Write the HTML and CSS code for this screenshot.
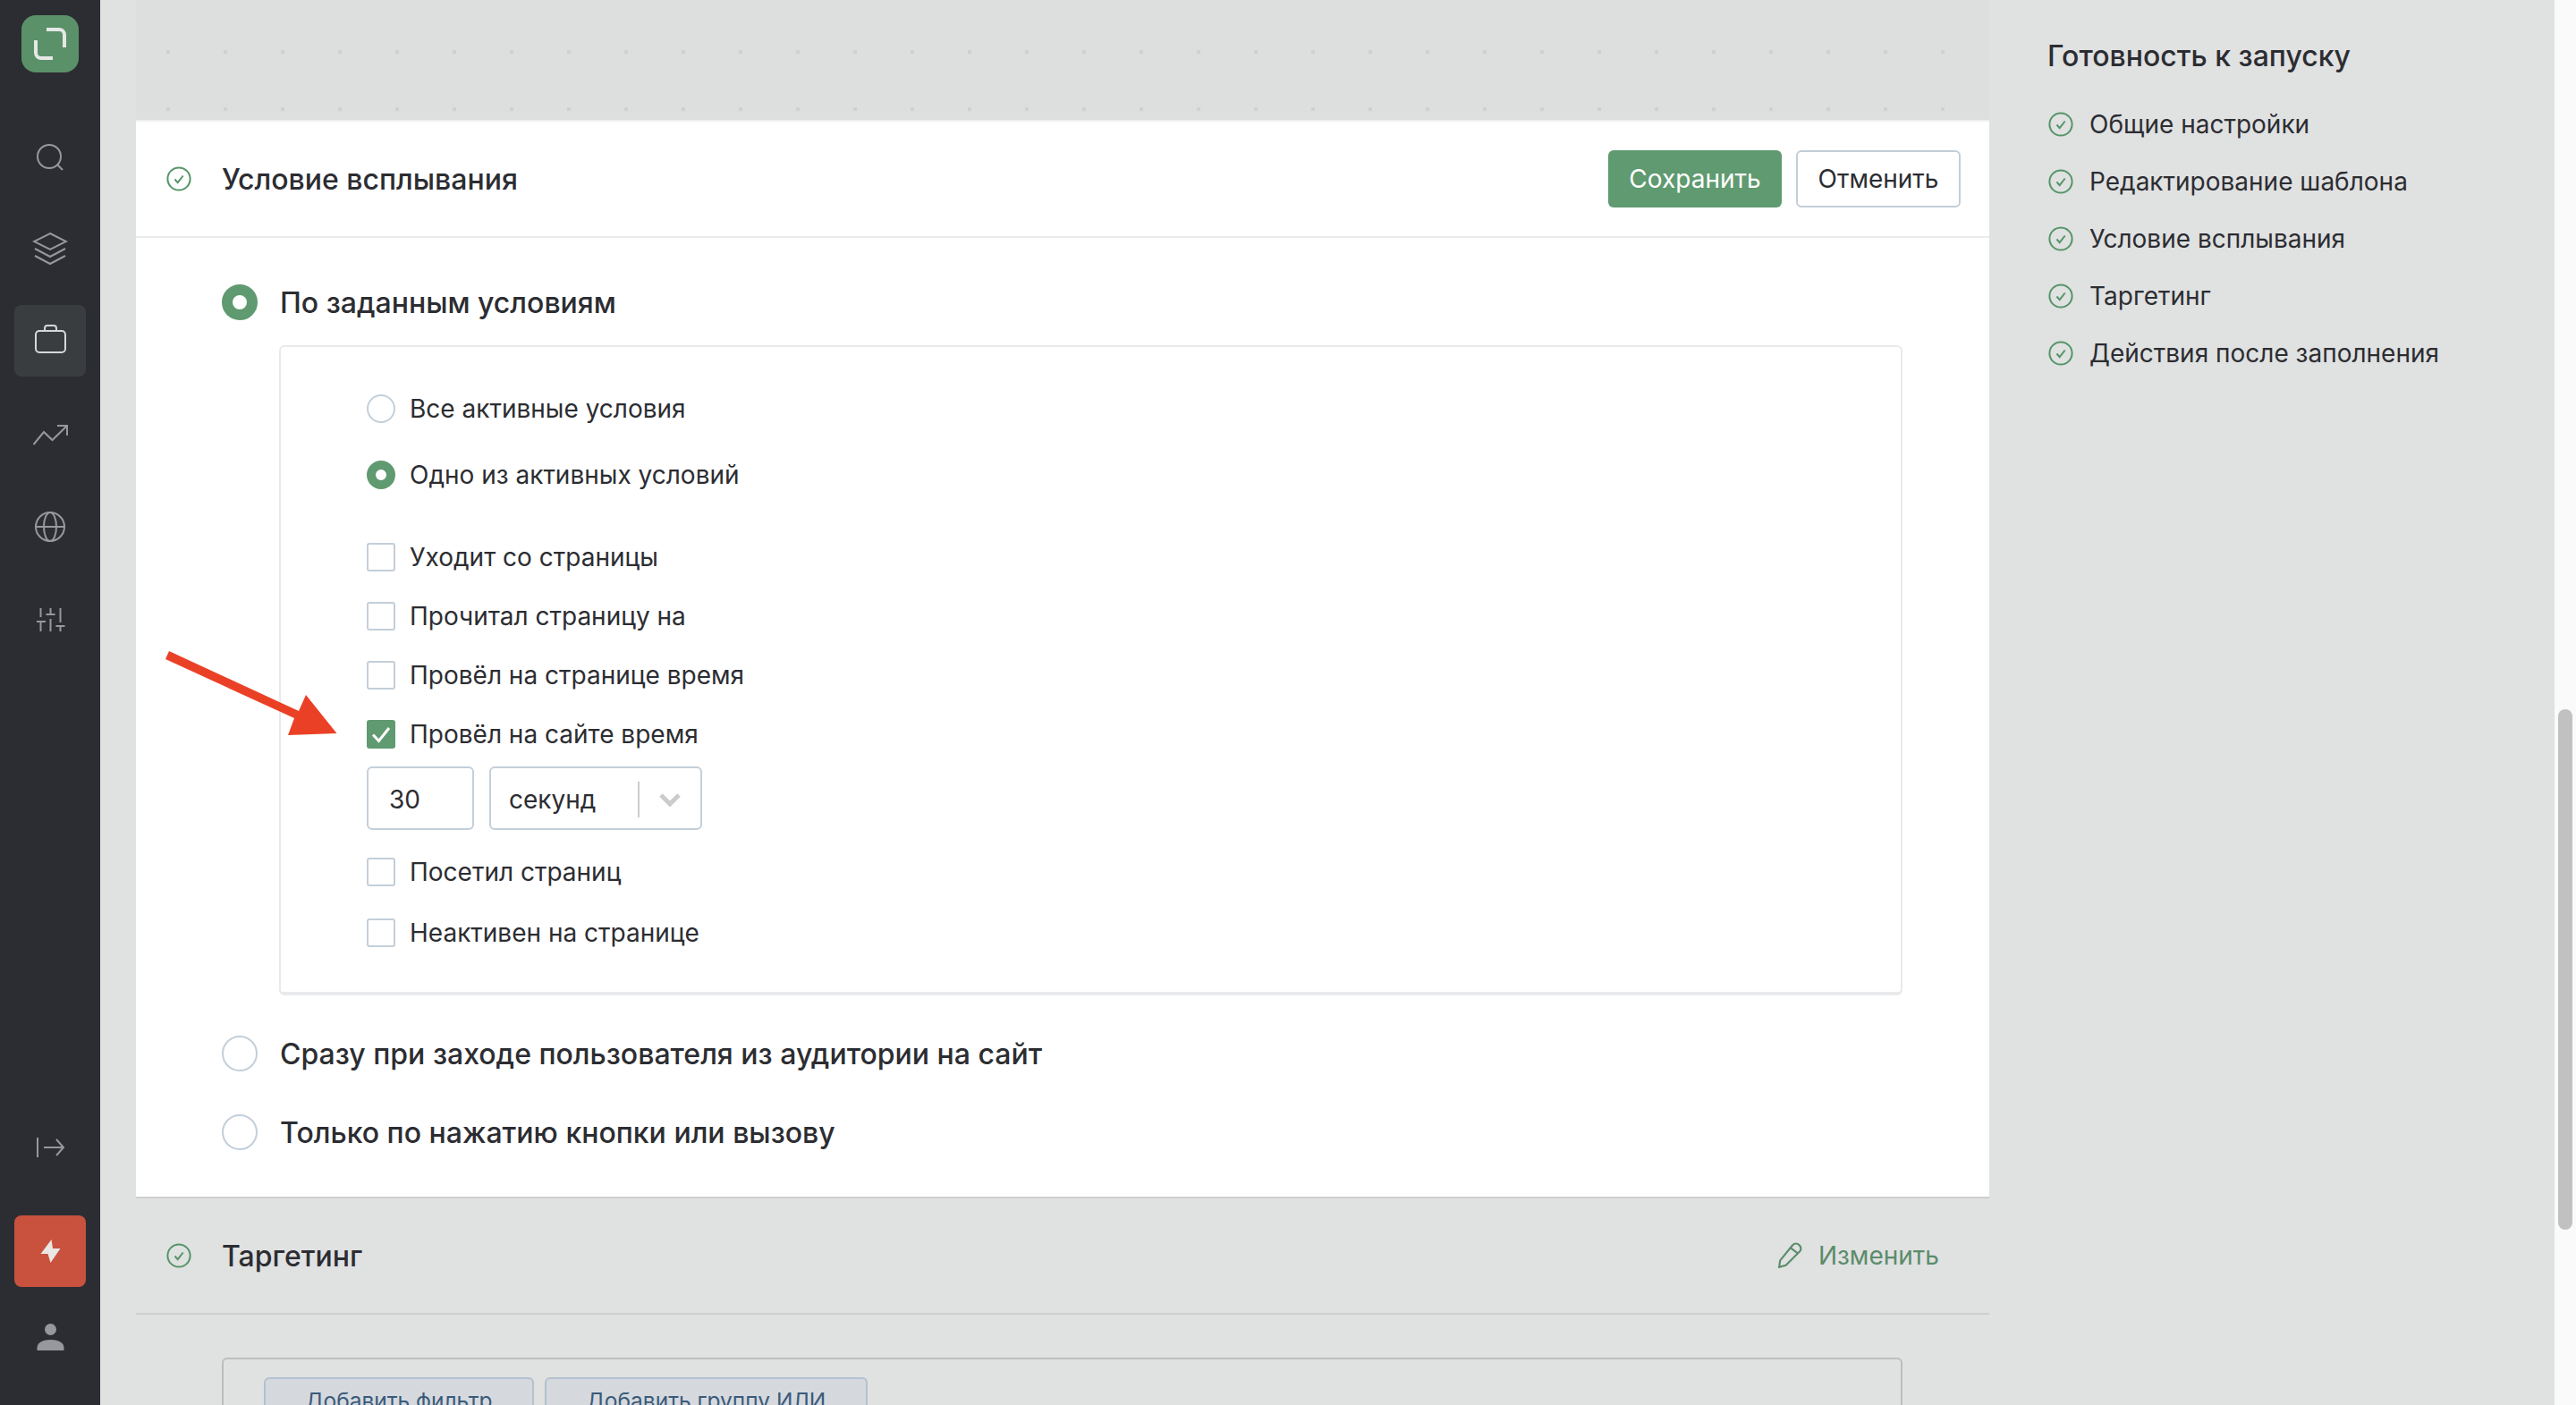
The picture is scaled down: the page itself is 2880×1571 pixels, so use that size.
FILE: index.html
```html
<!DOCTYPE html>
<html>
<head>
	<meta charset="utf-8">
	<title>Условие всплывания</title>
	<link rel="stylesheet" href="styles.css">
</head>
<body>

	<svg class="defs" width="0" height="0">
		<symbol id="check" viewBox="0 0 28 28">
			<circle cx="14" cy="14" r="12.6" fill="none" stroke="#549568" stroke-width="2"/>
			<path d="M9.5 14.5l3.2 3.6 6-7.6" fill="none" stroke="#549568" stroke-width="2"/>
		</symbol>
	</svg>

	<div class="sidebar">
		<div class="logo">
			<svg width="64" height="64" viewBox="0 0 64 64" fill="none" stroke="#e6e8e6" stroke-width="4">
				<path d="M28 16H42a6 6 0 0 1 6 6V36"/>
				<path d="M16 28V42a6 6 0 0 0 6 6H35"/>
			</svg>
		</div>
		<div class="navItem navFirst">
			<svg width="40" height="40" viewBox="0 0 40 40" fill="none" stroke="#97989b" stroke-width="2">
				<circle cx="19" cy="20" r="13"/><path d="M28 29l6 6"/>
			</svg>
		</div>
		<div class="navItem">
			<svg width="40" height="40" viewBox="0 0 40 40" fill="none" stroke="#97989b" stroke-width="2">
				<path d="M20 3L38 12 20 21 2 12z"/><path d="M3 20l17 9 17-9"/><path d="M3 28l17 9 17-9"/>
			</svg>
		</div>
		<div class="navItem active">
			<svg width="40" height="40" viewBox="0 0 40 40" fill="none" stroke="#d6d7d8" stroke-width="2">
				<rect x="4" y="9" width="33" height="24" rx="4"/><path d="M14 9V6a3 3 0 0 1 3-3h7a3 3 0 0 1 3 3v3"/>
			</svg>
		</div>
		<div class="navItem navLow">
			<svg width="40" height="40" viewBox="0 0 40 40" fill="none" stroke="#97989b" stroke-width="2">
				<path d="M1.5 32L13 18l9.5 9L39 11"/><path d="M28 11h11v11"/>
			</svg>
		</div>
		<div class="navItem navLow">
			<svg width="40" height="40" viewBox="0 0 40 40" fill="none" stroke="#97989b" stroke-width="2">
				<circle cx="20" cy="20" r="16"/><ellipse cx="20" cy="20" rx="7" ry="16"/><path d="M4 20h32"/>
			</svg>
		</div>
		<div class="navItem navLow">
			<svg width="40" height="40" viewBox="0 0 40 40" fill="none" stroke="#97989b" stroke-width="2">
				<path d="M9.5 7v10M5 22h10M9.5 23v10"/>
				<path d="M20.5 7v6M15.5 14h10M20.5 19v14"/>
				<path d="M31.5 7v16M26.5 27h10M31.5 28v5"/>
			</svg>
		</div>
		<div class="navItem navExit">
			<svg width="40" height="40" viewBox="0 0 40 40" fill="none" stroke="#97989b" stroke-width="2">
				<path d="M6 9v22M13 20h22M27 11l8 9-8 9"/>
			</svg>
		</div>
		<div class="navItem bolt">
			<svg width="40" height="40" viewBox="0 0 40 40" fill="#e9e6e4">
				<path d="M21.5 7L9.5 23h8l3 10 11-16H23z"/>
			</svg>
		</div>
		<div class="navItem navUser">
			<svg width="40" height="40" viewBox="0 0 40 40" fill="#97989b">
				<circle cx="20.5" cy="11.5" r="6.5"/><path d="M5.5 35v-3c0-6 7-9 15-9s15 3 15 9v3z"/>
			</svg>
		</div>
	</div>

	<div class="main">
		<div class="shablon"></div>

		<div class="card">
			<div class="sectionHeader headerWhite">
				<svg class="checkIcon"><use href="#check"/></svg>
				<h2 class="sectionTitle">Условие всплывания</h2>
				<div class="actions">
					<button class="btn btnGreen">Сохранить</button>
					<button class="btn btnWhite">Отменить</button>
				</div>
			</div>

			<div class="cardBody">
				<div class="bigOption">
					<span class="bigRadio bigRadioOn"></span>
					<span>По заданным условиям</span>
				</div>

				<div class="conditions">
					<div class="row">
						<span class="radio"></span><span>Все активные условия</span>
					</div>
					<div class="row rowAfterRadio">
						<span class="radio radioOn"></span><span>Одно из активных условий</span>
					</div>
					<div class="row rowFirstCheck">
						<span class="box"></span><span>Уходит со страницы</span>
					</div>
					<div class="row">
						<span class="box"></span><span>Прочитал страницу на</span>
					</div>
					<div class="row">
						<span class="box"></span><span>Провёл на странице время</span>
					</div>
					<div class="row">
						<span class="box boxOn">
							<svg width="32" height="32" viewBox="0 0 32 32" fill="none" stroke="#fff" stroke-width="3">
								<path d="M7 16.5l6.5 7L25 9"/>
							</svg>
						</span>
						<span>Провёл на сайте время</span>
					</div>
					<div class="timeFields">
						<div class="field fieldNum">30</div>
						<div class="field fieldSelect">
							<span class="selectText">секунд</span>
							<span class="selectArrow">
								<svg width="24" height="16" viewBox="0 0 24 16" fill="none" stroke="#cccccc" stroke-width="5">
									<path d="M2 3l10 10L22 3"/>
								</svg>
							</span>
						</div>
					</div>
					<div class="row rowAfterFields">
						<span class="box"></span><span>Посетил страниц</span>
					</div>
					<div class="row rowLast">
						<span class="box"></span><span>Неактивен на странице</span>
					</div>
				</div>

				<div class="bigOption bigOptionSecond">
					<span class="bigRadio"></span>
					<span>Сразу при заходе пользователя из аудитории на сайт</span>
				</div>
				<div class="bigOption bigOptionThird">
					<span class="bigRadio"></span>
					<span>Только по нажатию кнопки или вызову</span>
				</div>
			</div>
		</div>

		<div class="sectionHeader headerGray">
			<svg class="checkIcon"><use href="#check"/></svg>
			<h2 class="sectionTitle">Таргетинг</h2>
			<a class="editLink">
				<svg width="30" height="30" viewBox="0 0 28 28" fill="none" stroke="#5b8c6b" stroke-width="2">
					<path d="M2 26l1-7L16 3c2-2 5-2 7 0s2 4 1 6L9 24z"/><path d="M14 6l8 6"/>
				</svg>
				Изменить
			</a>
		</div>

		<div class="filterBox">
			<button class="btnFilter btnFilterOne">Добавить фильтр</button>
			<button class="btnFilter btnFilterTwo">Добавить группу ИЛИ</button>
		</div>
	</div>

	<div class="aside">
		<h3 class="asideTitle">Готовность к запуску</h3>
		<div class="asideItem"><svg class="checkIcon"><use href="#check"/></svg>Общие настройки</div>
		<div class="asideItem"><svg class="checkIcon"><use href="#check"/></svg>Редактирование шаблона</div>
		<div class="asideItem"><svg class="checkIcon"><use href="#check"/></svg>Условие всплывания</div>
		<div class="asideItem"><svg class="checkIcon"><use href="#check"/></svg>Таргетинг</div>
		<div class="asideItem"><svg class="checkIcon"><use href="#check"/></svg>Действия после заполнения</div>
	</div>

	<div class="scrollbar"><div class="scrollThumb"></div></div>

	<svg class="arrow" width="200" height="100" viewBox="0 0 200 100">
		<path d="M4 3L149 70 157 52 191.500 95 137 97 144 78 0 12z" fill="#ea4126"/>
	</svg>

</body>
</html>
```

FILE: styles.css
```css
html, body {
	margin: 0;
	height: 1571px;
	overflow: hidden;
}

body {
	display: flex;
	position: relative;
	background-color: #e0e1e1;
	font-family: Inter, "Noto Sans", sans-serif;
	font-size: 28px;
	color: #2c2d32;
}

.defs {
	position: absolute;
}

/* sidebar */

.sidebar {
	width: 112px;
	flex-shrink: 0;
	height: 1571px;
	background-color: #2c2d32;
	display: flex;
	flex-direction: column;
	align-items: center;
}

.logo {
	width: 64px;
	height: 64px;
	margin-top: 17px;
	border-radius: 16px;
	background-color: #5b9169;
}

.navItem {
	width: 80px;
	height: 80px;
	margin-top: 23px;
	border-radius: 8px;
	display: flex;
	align-items: center;
	justify-content: center;
}

.navFirst {
	margin-top: 54px;
}

.navLow {
	margin-top: 24px;
}

.active {
	background-color: #3a3d40;
}

.navExit {
	margin-top: auto;
	margin-bottom: 36px;
}

.bolt {
	margin-top: 0;
	background-color: #c8523e;
}

.navUser {
	margin-top: 16px;
	margin-bottom: 36px;
}

/* main column */

.main {
	width: 2072px;
	flex-shrink: 0;
	margin-left: 40px;
	height: 1571px;
	overflow: hidden;
}

.shablon {
	height: 134px;
	background-color: #dddfde;
	background-image: conic-gradient(from 270deg at 4px 4px, #cfd1d0 25%, transparent 0);
	background-size: 64px 64px;
	background-position: 34px 56px;
}

.card {
	background-color: white;
	border-top: 2px solid #eef0ef;
	border-bottom: 2px solid #cdcfcf;
}

.sectionHeader {
	height: 128px;
	padding: 0 32px 0 34px;
	display: flex;
	align-items: center;
}

.headerWhite {
	border-bottom: 2px solid #eaebeb;
}

.headerGray {
	border-bottom: 2px solid #cdcfcf;
}

.checkIcon {
	width: 28px;
	height: 28px;
	flex-shrink: 0;
}

.sectionTitle {
	margin: 0 0 0 34px;
	font-size: 32px;
	font-weight: 500;
	flex-grow: 1;
}

.actions {
	display: flex;
	gap: 16px;
}

.btn {
	height: 64px;
	border-radius: 6px;
	font-family: inherit;
	font-size: 28px;
}

.btnGreen {
	width: 194px;
	border: none;
	background-color: #5f9a70;
	color: white;
}

.btnWhite {
	width: 184px;
	border: 2px solid #c3cdd6;
	background-color: white;
	color: #2c2d32;
}

.cardBody {
	padding: 52px 0 52px 96px;
}

.bigOption {
	display: flex;
	align-items: center;
	gap: 25px;
	height: 40px;
	font-size: 32px;
	font-weight: 470;
}

.bigOptionSecond {
	margin-top: 45px;
}

.bigOptionThird {
	margin-top: 48px;
}

.bigRadio {
	width: 40px;
	height: 40px;
	box-sizing: border-box;
	border: 2px solid #c3cfda;
	border-radius: 50%;
	background-color: white;
}

.bigRadioOn {
	border: 12px solid #5f9a70;
}

.conditions {
	width: 1815px;
	box-sizing: border-box;
	margin: 28px 0 0 64px;
	padding: 53px 0 50px 96px;
	border: 2px solid #e8eaec;
	border-bottom-width: 4px;
	border-radius: 6px;
}

.row {
	display: flex;
	align-items: center;
	gap: 16px;
	height: 32px;
	margin-top: 34px;
}

.row:first-child {
	margin-top: 0;
}

.rowAfterRadio {
	margin-top: 42px;
}

.rowFirstCheck {
	margin-top: 60px;
}

.rowAfterFields {
	margin-top: 31px;
}

.rowLast {
	margin-top: 36px;
}

.radio {
	width: 32px;
	height: 32px;
	box-sizing: border-box;
	border: 2px solid #c3cfda;
	border-radius: 50%;
}

.radioOn {
	border: 10px solid #5f9a70;
}

.box {
	width: 32px;
	height: 32px;
	box-sizing: border-box;
	border: 2px solid #c3cfda;
	border-radius: 3px;
}

.boxOn {
	border: none;
	background-color: #5f9a70;
}

.timeFields {
	display: flex;
	gap: 17px;
	margin-top: 20px;
}

.field {
	height: 71px;
	box-sizing: border-box;
	padding-top: 2px;
	border: 2px solid #c3cfda;
	border-radius: 6px;
	display: flex;
	align-items: center;
}

.fieldNum {
	width: 120px;
	padding-left: 23px;
}

.fieldSelect {
	width: 238px;
	padding-left: 20px;
}

.selectText {
	flex-grow: 1;
}

.selectArrow {
	width: 70px;
	height: 40px;
	box-sizing: border-box;
	border-left: 2px solid #cccccc;
	display: flex;
	align-items: center;
	justify-content: center;
}

/* targeting */

.editLink {
	display: flex;
	align-items: center;
	gap: 16px;
	margin-right: 24px;
	color: #5b8c6b;
}

.filterBox {
	width: 1879px;
	height: 120px;
	box-sizing: border-box;
	margin: 48px 0 0 96px;
	padding: 20px 0 0 45px;
	border: 2px solid #bcbdbd;
	border-radius: 6px;
	display: flex;
	gap: 12px;
}

.btnFilter {
	height: 64px;
	padding: 0 0 12px;
	border: 2px solid #b3c1cf;
	border-radius: 6px;
	background-color: #d5d9de;
	color: #3b5a7a;
	font-family: inherit;
	font-size: 24.5px;
}

.btnFilterOne {
	width: 302px;
}

.btnFilterTwo {
	width: 361px;
}

/* right column */

.aside {
	flex-grow: 1;
	padding: 43px 0 0 65px;
}

.asideTitle {
	margin: 0 0 24px;
	font-size: 32px;
	line-height: 40px;
	font-weight: 500;
}

.asideItem {
	display: flex;
	align-items: center;
	gap: 18px;
	height: 64px;
	margin-left: 1px;
}

.scrollbar {
	width: 24px;
	flex-shrink: 0;
	background-color: #fafafa;
	box-sizing: border-box;
	padding: 793px 4px 0;
}

.scrollThumb {
	height: 582px;
	border-radius: 8px;
	background-color: #c1c1c1;
}

/* annotation drawn over the form */

.arrow {
	position: absolute;
	left: 185px;
	top: 725px;
}
```
